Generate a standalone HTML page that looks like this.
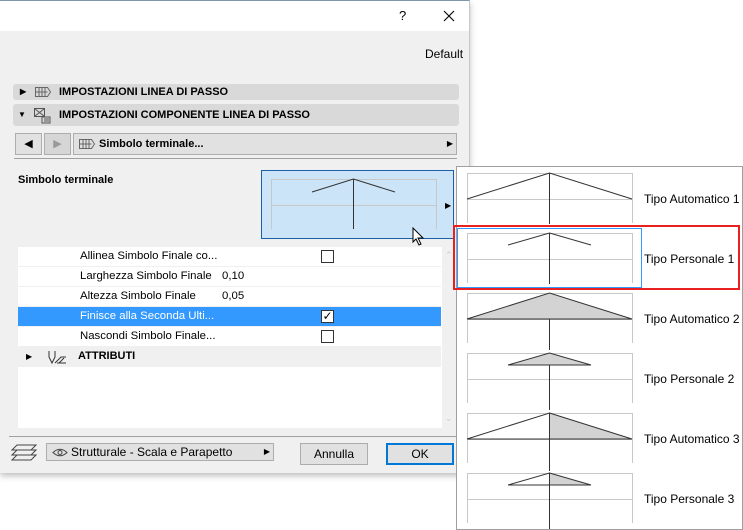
<!DOCTYPE html>
<html><head><meta charset="utf-8"><style>
*{box-sizing:border-box;margin:0;padding:0}
body{width:743px;height:530px;background:#fff;position:relative;overflow:hidden;font-family:"Liberation Sans",sans-serif;font-size:11px;color:#000}
.a{position:absolute}
.hdr{position:absolute;left:13px;width:446px;background:#d9d9d9;border-radius:3px;font-weight:bold;font-size:11px}
.row{position:absolute;left:18px;width:423px;height:20px;border-bottom:1px solid #f0f0f0;background:#fff;font-size:11.4px}
.row span{position:absolute;top:3px}
.cb{position:absolute;left:303px;top:3px;width:13px;height:13px;border:1px solid #333;background:#fff}
.btn{position:absolute;background:#e1e1e1;border:1px solid #adadad;text-align:center;font-size:12px}
.lbl{position:absolute;font-size:12px}
</style></head><body>
<div class="a" style="left:0;top:0;width:470px;height:473px;background:#f0f0f0;box-shadow:0 3px 6px rgba(0,0,0,.25);border-top:1px solid #8096b0;border-right:1px solid #c8c8c8"></div>
<div class="a" style="left:0;top:1px;width:469px;height:30px;background:#fff"></div>
<div class="a" style="left:399px;top:8px;font-size:13px">?</div>
<svg class="a" style="left:443px;top:10px" width="12" height="12"><path d="M1 1l10 10M11 1L1 11" stroke="#000" stroke-width="1.1"/></svg>
<div class="a" style="left:425px;top:47px;font-size:12px">Default</div>

<div class="hdr" style="top:84px;height:16px"><span class="a" style="left:7px;top:3px;font-size:8px">▶</span>
<svg class="a" style="left:22px;top:3px" width="16" height="10"><path d="M0.5 .5h12l3 4.5-3 4.5h-12zM4 .5v9M7 .5v9M10 .5v9M0.5 5h12" fill="none" stroke="#666"/></svg>
<span class="a" style="left:46px;top:2px">IMPOSTAZIONI LINEA DI PASSO</span></div>
<div class="hdr" style="top:104px;height:22px"><span class="a" style="left:5px;top:6px;font-size:8px">▼</span>
<svg class="a" style="left:20px;top:3px" width="18" height="17"><rect x="1.5" y="1.5" width="10" height="8" fill="none" stroke="#555"/><path d="M2 2l9 7M11 2l-9 7M9 10h8v6H9zM11 12h5M11 14h5" stroke="#555" fill="none"/></svg>
<span class="a" style="left:46px;top:5px">IMPOSTAZIONI COMPONENTE LINEA DI PASSO</span></div>

<div class="btn" style="left:15px;top:133px;width:27px;height:22px;font-size:11px;line-height:20px">◀</div>
<div class="btn" style="left:44px;top:133px;width:27px;height:22px;font-size:11px;line-height:20px;color:#999;background:#d6d6d6">▶</div>
<div class="btn" style="left:73px;top:133px;width:384px;height:22px;text-align:left">
<svg class="a" style="left:5px;top:5px" width="16" height="10"><path d="M0.5 .5h12l3 4.5-3 4.5h-12zM4 .5v9M7 .5v9M10 .5v9M0.5 5h12" fill="none" stroke="#666"/></svg>
<span class="a" style="left:25px;top:4px;font-weight:bold;font-size:11px">Simbolo terminale...</span><span class="a" style="right:3px;top:5px;font-size:8px">▶</span></div>
<div class="a" style="left:14px;top:158px;width:443px;height:1px;background:#a0a0a0"></div>

<div class="a" style="left:18px;top:174px;font-weight:bold;font-size:11px">Simbolo terminale</div>
<div class="a" style="left:261px;top:170px;width:193px;height:69px;background:#cce4f7;border:1px solid #1a5fa8"></div>
<svg class="a" style="left:261px;top:170px" width="193" height="69"><path d="M10.5 9.5v50M175.5 9.5v50M10 9.5h166M10 35.5h166" stroke="#c8c8c8" fill="none"/><path d="M92.5 9v50M51 22L92.5 9 134 22" stroke="#333" fill="none"/></svg>
<div class="a" style="left:445px;top:201px;font-size:8px">▶</div>
<svg class="a" style="left:412px;top:227px" width="14" height="20"><path d="M1 1v14l3-3 3 6 2-1-3-6h5z" fill="#fff" stroke="#000"/></svg>

<div class="a" style="left:18px;top:247px;width:424px;height:181px;background:#fff"></div>
<div class="row" style="top:247px"><span style="left:62px">Allinea Simbolo Finale co...</span><div class="cb"></div></div>
<div class="row" style="top:267px"><span style="left:62px">Larghezza Simbolo Finale</span><span style="left:204px">0,10</span></div>
<div class="row" style="top:287px"><span style="left:62px">Altezza Simbolo Finale</span><span style="left:204px">0,05</span></div>
<div class="row" style="top:307px;background:#3399ff;color:#fff"><span style="left:62px">Finisce alla Seconda Ulti...</span><div class="cb" style="color:#000;font-size:12px;line-height:11px;text-align:center;background:#fff">✓</div></div>
<div class="row" style="top:327px"><span style="left:62px">Nascondi Simbolo Finale...</span><div class="cb"></div></div>
<div class="row" style="top:347px;background:#f0f0f0"><span style="left:8px;font-size:8px;top:5px">▶</span>
<svg class="a" style="left:30px;top:3px" width="20" height="15"><path d="M1 1v6l3 6 3-6V1M7 13l6-6 5 0M9 13h9M11 13l5-5" stroke="#333" fill="none"/></svg>
<span style="left:60px;font-weight:bold;font-size:11px">ATTRIBUTI</span></div>
<div class="a" style="left:445px;top:250px;color:#ccc;font-size:9px">⌃</div>
<div class="a" style="left:445px;top:413px;color:#ccc;font-size:9px">⌄</div>

<div class="a" style="left:9px;top:436px;width:447px;height:1px;background:#a0a0a0"></div>
<svg class="a" style="left:11px;top:444px" width="26" height="17"><path d="M6 1h19l-5 5H1zM6 6h19l-5 5H1zM6 11h19l-5 5H1z" fill="#f0f0f0" stroke="#444"/></svg>
<div class="btn" style="left:46px;top:443px;width:228px;height:18px;text-align:left">
<svg class="a" style="left:5px;top:4px" width="16" height="9"><path d="M1 4.5Q8-2 15 4.5Q8 11 1 4.5z" fill="none" stroke="#444"/><circle cx="8" cy="4.5" r="2" fill="none" stroke="#444"/></svg>
<span class="a" style="left:24px;top:1px;font-size:12px">Strutturale - Scala e Parapetto</span><span class="a" style="right:3px;top:3px;font-size:8px">▶</span></div>
<div class="btn" style="left:300px;top:443px;width:68px;height:22px;line-height:20px">Annulla</div>
<div class="btn" style="left:386px;top:443px;width:68px;height:22px;line-height:18px;border:2px solid #0078d7">OK</div>

<div class="a" style="left:456px;top:166px;width:287px;height:364px;background:#fff;border:1px solid #a0a0a0"></div>
<div class="a" style="left:453px;top:225px;width:287px;height:65px;border:2px solid #e82020"></div>
<div class="a" style="left:457px;top:228px;width:185px;height:60px;border:1px solid #3399ff"></div>
<svg class="a" style="left:456px;top:166px" width="287" height="364">
<g stroke="#c8c8c8" fill="none">
<path d="M11.5 7v50M176.5 7v50M11 7.5h166M11 33.5h166"/>
<path d="M11.5 67v50M176.5 67v50M11 67.5h166M11 93.5h166"/>
<path d="M11.5 127v50M176.5 127v50M11 127.5h166M11 153.5h166"/>
<path d="M11.5 187v50M176.5 187v50M11 187.5h166M11 213.5h166"/>
<path d="M11.5 247v50M176.5 247v50M11 247.5h166M11 273.5h166"/>
<path d="M11.5 307v50M176.5 307v50M11 307.5h166M11 333.5h166"/>
</g>
<g stroke="#333" fill="none">
<path d="M93.5 7v51M11 33L93.5 7 176 33"/>
<path d="M93.5 67v51M52 79L93.5 67 135 79"/>
<path d="M11 153L93.5 127 176 153z" fill="#d3d3d3"/><path d="M93.5 153v31"/>
<path d="M52 199L93.5 187 135 199z" fill="#d3d3d3"/><path d="M93.5 199v45"/>
<path d="M93.5 247L176 273H93.5z" fill="#d3d3d3"/><path d="M11 273L93.5 247v58M11 273h165"/>
<path d="M93.5 307L135 319H93.5z" fill="#d3d3d3"/><path d="M52 319L93.5 307v56M52 319h83"/>
</g></svg>
<div class="lbl a" style="left:644px;top:192px">Tipo Automatico 1</div>
<div class="lbl a" style="left:644px;top:252px">Tipo Personale 1</div>
<div class="lbl a" style="left:644px;top:312px">Tipo Automatico 2</div>
<div class="lbl a" style="left:644px;top:372px">Tipo Personale 2</div>
<div class="lbl a" style="left:644px;top:432px">Tipo Automatico 3</div>
<div class="lbl a" style="left:644px;top:492px">Tipo Personale 3</div>
</body></html>
